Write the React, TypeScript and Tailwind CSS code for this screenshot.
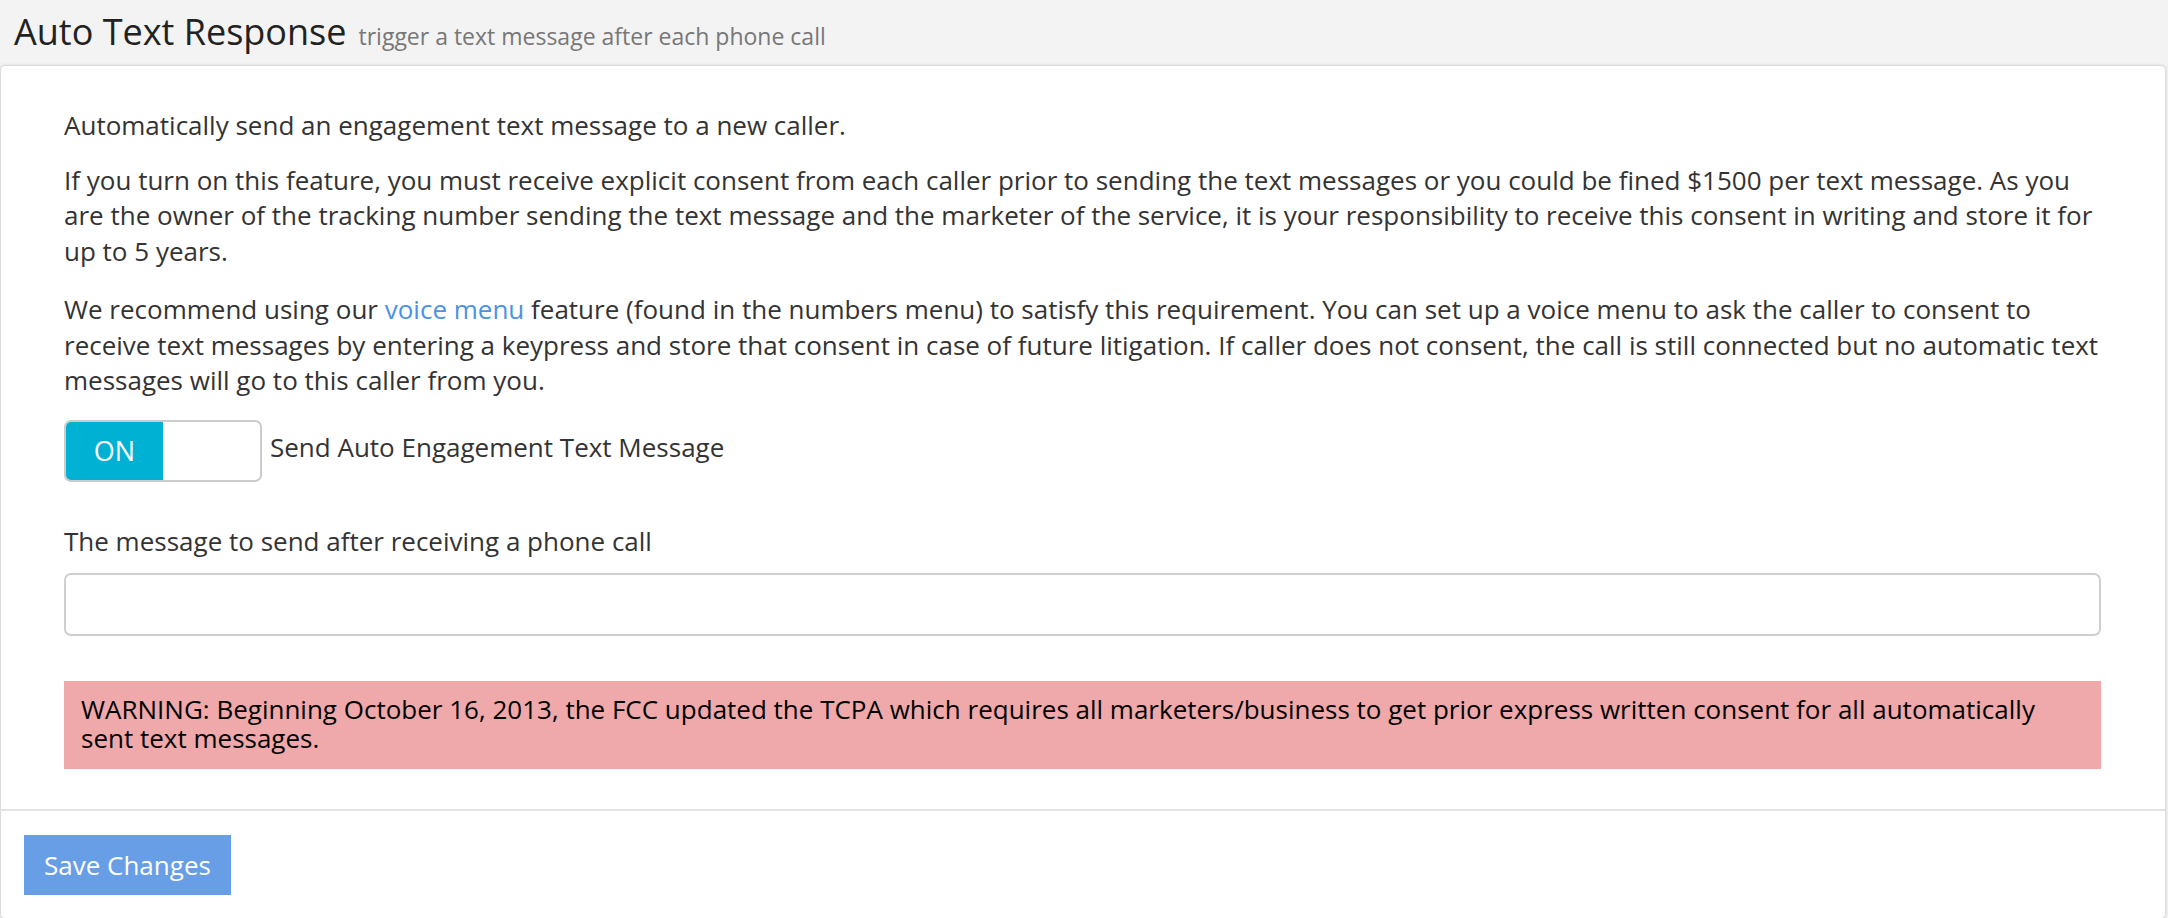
import React, { useState } from 'react';

const App = () => {
  const [enabled, setEnabled] = useState(true);
  const [message, setMessage] = useState('');

  return (
    <div className="min-h-[918px] bg-[#f3f3f3] font-['Open_Sans',sans-serif] text-[#333]">
      {/* page header */}
      <div className="h-[65px] pl-[14px] pt-[14px] flex items-baseline">
        <h1 className="text-[36px] leading-none text-[#222] font-normal">Auto Text Response</h1>
        <span className="ml-[12px] text-[23px] leading-none text-[#777]">
          trigger a text message after each phone call
        </span>
      </div>

      <div className="mr-[2px] bg-white border border-[#dcdcdc] rounded-[5px] shadow-[0_0_3px_rgba(0,0,0,0.12)]">
        <div className="pt-[42px] pb-[40px] pl-[63px] pr-[64px] text-[26px] leading-[35.5px]">
          <p className="mb-[19px]">Automatically send an engagement text message to a new caller.</p>
          <p className="mb-[23px]">
            If you turn on this feature, you must receive explicit consent from each caller prior to sending the text
            messages or you could be fined $1500 per text message. As you are the owner of the tracking number sending
            the text message and the marketer of the service, it is your responsibility to receive this consent in
            writing and store it for up to 5 years.
          </p>
          <p className="mb-[21px]">
            We recommend using our{' '}
            <a href="#" className="text-[#4a93e4]">
              voice menu
            </a>{' '}
            feature (found in the numbers menu) to satisfy this requirement. You can set up a voice menu to ask the
            caller to consent to receive text messages by entering a keypress and store that consent in case of future
            litigation. If caller does not consent, the call is still connected but no automatic text messages will go
            to this caller from you.
          </p>

          <div className="flex items-center">
            <button
              type="button"
              onClick={() => setEnabled(!enabled)}
              className="w-[198px] h-[62px] flex border-2 border-[#cccccc] rounded-[7px] overflow-hidden bg-white"
            >
              <span className="w-1/2 h-full bg-[#00b1d3] text-white flex items-center justify-center text-[27px]">
                {enabled ? 'ON' : ''}
              </span>
              <span className="w-1/2 h-full" />
            </button>
            <span className="ml-[8px] -mt-[6px]">Send Auto Engagement Text Message</span>
          </div>

          <label className="block mt-[42px] mb-[14px]">The message to send after receiving a phone call</label>
          <input
            type="text"
            value={message}
            onChange={(e) => setMessage(e.target.value)}
            className="block w-full h-[63px] border-2 border-[#cfcfcf] rounded-[7px] px-[16px] outline-none"
          />

          <div className="mt-[45px] bg-[#efa9aa] text-black text-[26px] leading-[29px] pl-[17px] pr-[16px] pt-[14px] pb-[16px]">
            WARNING: Beginning October 16, 2013, the FCC updated the TCPA which requires all marketers/business to get
            prior express written consent for all automatically sent text messages.
          </div>
        </div>

        <div className="border-t-2 border-[#e2e2e2] pl-[23px] pt-[24px] pb-[23px]">
          <button type="button" className="h-[60px] px-[20px] bg-[#679ee6] text-white text-[26px]">
            Save Changes
          </button>
        </div>
      </div>
    </div>
  );
};

export default App;
